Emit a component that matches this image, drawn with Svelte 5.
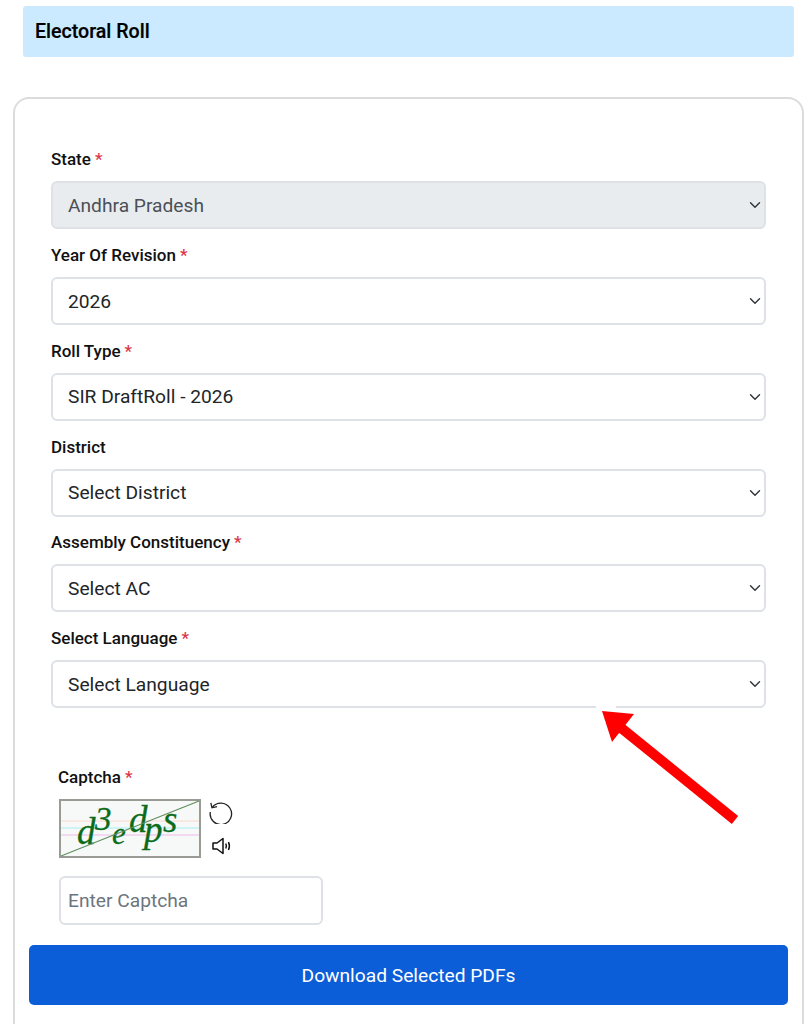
<script>
	const fields = [
		{ label: 'State', required: true, value: 'Andhra Pradesh', disabled: true },
		{ label: 'Year Of Revision', required: true, value: '2026' },
		{ label: 'Roll Type', required: true, value: 'SIR DraftRoll - 2026' },
		{ label: 'District', required: false, value: 'Select District' },
		{ label: 'Assembly Constituency', required: true, value: 'Select AC' },
		{ label: 'Select Language', required: true, value: 'Select Language' }
	]
</script>

<div class="page">
	<div class="banner"><h1>Electoral Roll</h1></div>

	<div class="card">
		{#each fields as f}
			<div class="field">
				<label for={f.label}>{f.label}{#if f.required}<span class="req">*</span>{/if}</label>
				<select id={f.label} disabled={f.disabled}>
					<option>{f.value}</option>
				</select>
			</div>
		{/each}

		<div class="captcha">
			<label for="captcha">Captcha<span class="req">*</span></label>
			<div class="captcha-row">
				<svg class="captcha-img" viewBox="0 0 142 59" width="142" height="59">
					<rect x="1" y="1" width="140" height="57" fill="#f7f9f8" stroke="#999c94" stroke-width="2" />
					<line x1="2" y1="22" x2="140" y2="22" stroke="#f8d8d0" />
					<line x1="2" y1="29" x2="140" y2="29" stroke="#a8ecf0" />
					<line x1="2" y1="36" x2="140" y2="36" stroke="#f0b8ec" />
					<g class="captcha-text">
						<text x="18" y="45" font-size="37">d</text>
						<text x="36" y="31" font-size="33">3</text>
						<text x="53" y="45" font-size="31">e</text>
						<text x="70" y="33" font-size="37">d</text>
						<text x="85" y="43" font-size="37">p</text>
						<text x="104" y="33" font-size="37">s</text>
					</g>
					<line x1="2" y1="57" x2="140" y2="2" stroke="#5f8f5f" stroke-width="1.2" />
				</svg>
				<div class="captcha-icons">
					<svg viewBox="0 0 24 24" width="24" height="24" fill="none" stroke="#222" stroke-width="1.3">
						<path d="M3.2 7.500A10.700 10.700 0 1 1 1.300 12" />
						<path d="M1.800 2.800 3 7.800 8 6.600" />
					</svg>
					<svg class="speaker" viewBox="0 0 20 18" width="20" height="18" fill="none" stroke="#111" stroke-width="1.5">
						<path d="M1 6h4l6-4.500v15L5 12H1z" stroke-linejoin="round" />
						<path d="M13.800 6.500q1.200 2.500 0 5M16.500 5q1.800 4 0 8" />
					</svg>
				</div>
			</div>
			<input id="captcha" type="text" placeholder="Enter Captcha" />
		</div>

		<button type="button">Download Selected PDFs</button>
	</div>

	<svg class="arrow" viewBox="0 0 145 120" width="145" height="120">
		<rect x="0" y="0" width="20" height="5" fill="#fff" />
		<path d="M139 114 24 21" stroke="#ff0000" stroke-width="10" />
		<polygon points="6,5 38,8 16,36" fill="#ff0000" />
	</svg>
</div>

<style>
	:global(body) {
		margin: 0;
		background: #fff;
	}
	:global(*) {
		box-sizing: border-box;
	}
	.page {
		position: relative;
		height: 1024px;
		overflow: hidden;
		padding: 6px 16px 0 13px;
		font-family: Roboto, sans-serif;
		color: #212529;
	}
	.banner {
		margin: 0 0 40px 10px;
		height: 51px;
		background: #cbeaff;
		border-radius: 3px;
		padding: 0 12px;
		display: flex;
		align-items: center;
	}
	h1 {
		margin: 0;
		font-size: 19.600px;
		font-weight: 500;
		color: #000;
		-webkit-text-stroke: 0.2px #000;
	}
	.card {
		border: 2px solid #dcdcdc;
		border-radius: 16px;
		width: 791px;
		height: 1000px;
		padding: 49.300px 36px 0 15px;
	}
	.field {
		padding-left: 21px;
		margin-bottom: 14.800px;
	}
	label {
		display: block;
		font-size: 17px;
		font-weight: 500;
		line-height: 22px;
		color: #111;
		margin-bottom: 11px;
	}
	.req {
		color: #dc3545;
		margin-left: 4px;
	}
	select {
		display: block;
		width: 100%;
		height: 48px;
		padding: 0 36px 0 15px;
		font: 400 19.200px Roboto, sans-serif;
		color: #212529;
		background: #fff url("data:image/svg+xml,%3csvg xmlns='http://www.w3.org/2000/svg' viewBox='0 0 16 16'%3e%3cpath fill='none' stroke='%23343a40' stroke-linecap='round' stroke-linejoin='round' stroke-width='2' d='m2 5 6 6 6-6'/%3e%3c/svg%3e") no-repeat right 3px center / 12px 12px;
		border: 2px solid #dee2e6;
		border-radius: 6px;
		appearance: none;
		opacity: 1;
	}
	select:disabled {
		background-color: #e9ecef;
		color: #495057;
	}
	.captcha {
		padding: 43px 0 0 29px;
	}
	.captcha label {
		margin: 0 0 11px -1px;
	}
	.captcha-row {
		display: flex;
		gap: 8px;
		align-items: flex-start;
		margin-bottom: 18px;
	}
	.captcha-icons {
		display: flex;
		flex-direction: column;
		align-items: center;
		gap: 13px;
		padding-top: 1px;
	}
	.captcha-icons svg {
		display: block;
	}
	.captcha-icons .speaker {
		margin-left: 1px;
	}
	.captcha-img {
		display: block;
	}
	.captcha-text {
		fill: #0b6b1a;
		stroke: #0b6b1a;
		stroke-width: 0.3px;
		font-family: "Liberation Serif", serif;
		font-style: italic;
	}
	input {
		display: block;
		width: 264px;
		height: 49px;
		padding: 0 7px;
		font: 400 19.200px Roboto, sans-serif;
		border: 2px solid #dee2e6;
		border-radius: 6px;
	}
	input::placeholder {
		color: #6c757d;
	}
	button {
		display: block;
		width: 759px;
		height: 60px;
		margin: 20px 0 0 -1px;
		background: #0b5ed7;
		color: #fff;
		border: none;
		border-radius: 5px;
		font: 400 19.200px Roboto, sans-serif;
	}
	.arrow {
		position: absolute;
		left: 596px;
		top: 706px;
	}
</style>
